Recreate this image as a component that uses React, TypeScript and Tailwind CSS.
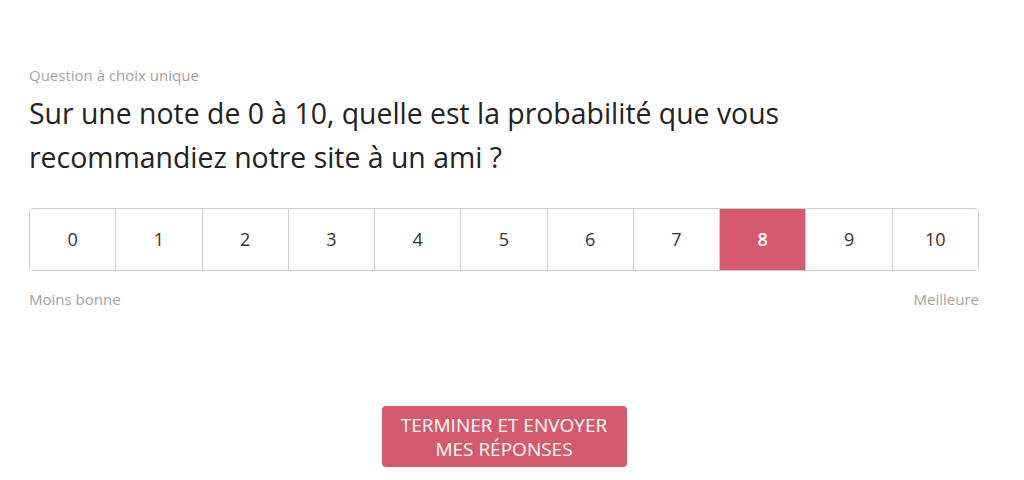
import React, { useState } from "react";

export default function App() {
  const [selected, setSelected] = useState(8);
  const values = [0, 1, 2, 3, 4, 5, 6, 7, 8, 9, 10];
  return (
    <div className="w-[1024px] h-[480px] bg-white overflow-hidden" style={{ fontFamily: '"Open Sans", sans-serif' }}>
      <div className="ml-[29px] w-[950px] pt-[65px]">
        <div className="text-[15px] leading-[20px] font-normal text-[#a3a3a3]">Question à choix unique</div>
        <h1 className="mt-[6px] text-[28.4px] leading-[44px] text-[#222222] font-normal">
          Sur une note de 0 à 10, quelle est la probabilité que vous
          <br />
          recommandiez notre site à un ami ?
        </h1>
        <div className="mt-[29px] flex h-[63px] border border-[#cccccc] rounded-[4px] overflow-hidden">
          {values.map((v, i) => (
            <button
              key={v}
              onClick={() => setSelected(v)}
              className={
                "flex-1 flex items-center justify-center text-[18px] " +
                (i > 0 ? "border-l border-[#cccccc] " : "") +
                (v === selected ? "bg-[#d65a6f] text-white font-semibold" : "bg-white text-[#333333]")
              }
            >
              {v}
            </button>
          ))}
        </div>
        <div className="mt-[18px] flex justify-between text-[15px] leading-[20px] font-normal text-[#a3a3a3]">
          <span>Moins bonne</span>
          <span>Meilleure</span>
        </div>
        <div className="mt-[97px] flex justify-center">
          <button className="w-[245px] h-[61px] bg-[#d65a6f] rounded-[4px] text-white text-[19px] leading-[24px] font-normal uppercase">
            Terminer et envoyer
            <br />
            mes réponses
          </button>
        </div>
      </div>
    </div>
  );
}
